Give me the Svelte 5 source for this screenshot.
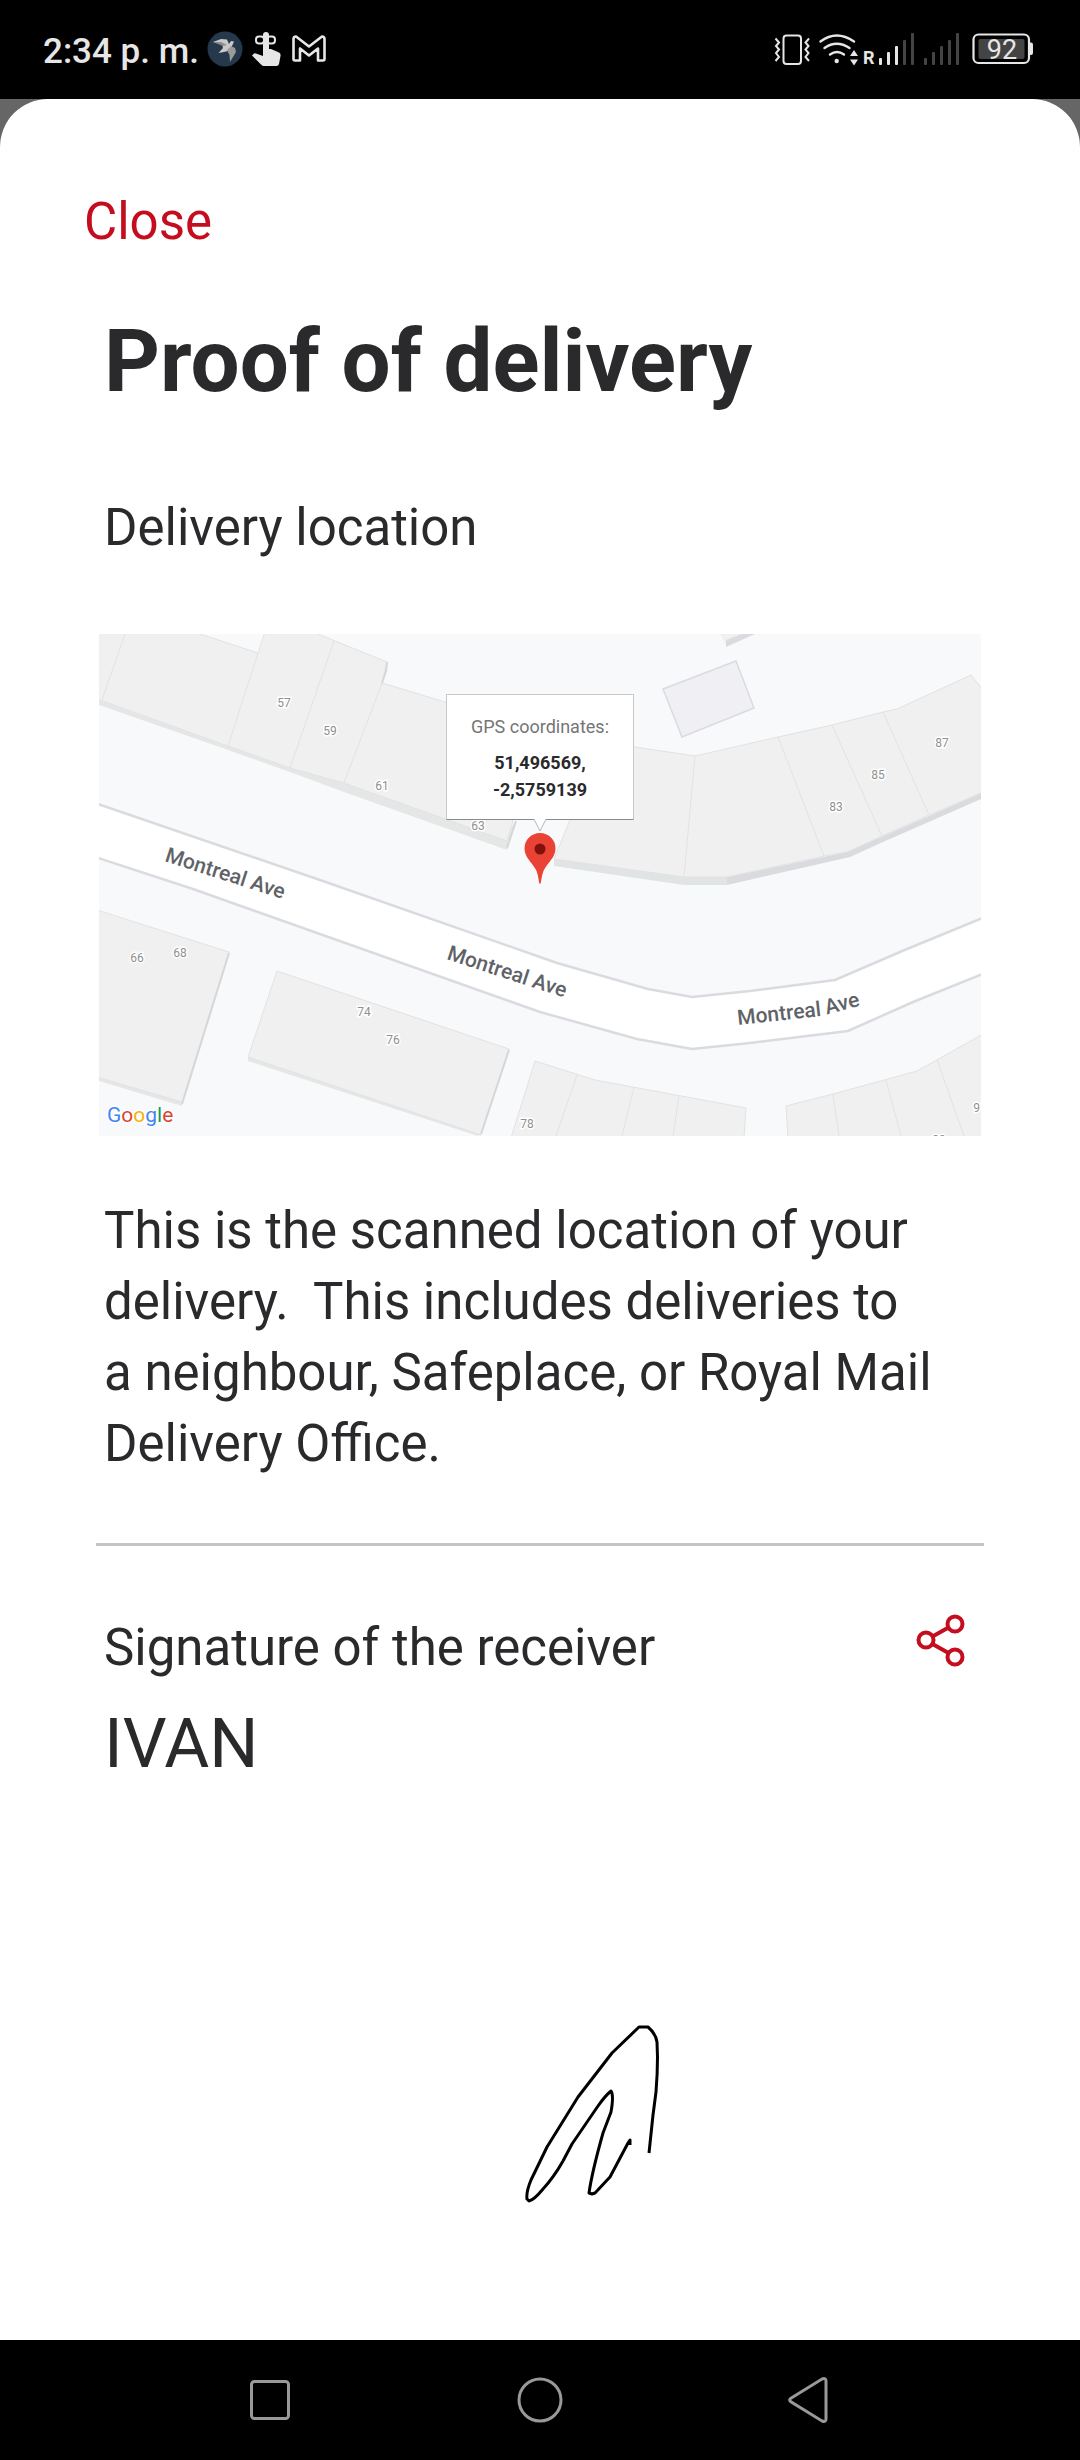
<script>
  let { receiver = 'IVAN', latitude = '51,496569', longitude = '-2,5759139' } = $props();

  let open = $state(true);

  // House numbers on the map
  const houses = [
    { number: '57', x: 185, y: 68 },
    { number: '59', x: 231, y: 96 },
    { number: '61', x: 283, y: 151 },
    { number: '63', x: 379, y: 191 },
    { number: '83', x: 737, y: 172 },
    { number: '85', x: 779, y: 140 },
    { number: '87', x: 843, y: 108 },
    { number: '66', x: 38, y: 323 },
    { number: '68', x: 81, y: 318 },
    { number: '74', x: 265, y: 377 },
    { number: '76', x: 294, y: 405 },
    { number: '78', x: 428, y: 489 },
    { number: '91', x: 881, y: 473 },
    { number: '89', x: 840, y: 505 }
  ];

  // Signal bars, left to right
  const bars = [
    { top: 27, height: 7 },
    { top: 21, height: 13 },
    { top: 15, height: 19 },
    { top: 9, height: 25 },
    { top: 2, height: 32 }
  ];
</script>

<div class="screen">
  <header class="status-bar">
    <div class="status-left">
      <span class="time">2:34 p. m.</span>
      <svg width="36" height="36" viewBox="0 0 36 36" aria-hidden="true">
        <circle cx="18" cy="18" r="17.5" fill="#26384b" />
        <path d="M6 11 L14 8 L20 8.5 L22 13 L24 10 L27 10.5 L25.500 14 L23.500 18 L21 20 L17 21 L11.500 22 L16 17 L15 13 Z" fill="#c9c9c9" />
        <path d="M24 15 L28 17 L29 21 L26 26 L23 31 L22.500 24 L20 19 Z" fill="#9b9b9b" />
        <path d="M6 11 L14 11 L20 14 L16 15 Z" fill="#8d8d8d" />
      </svg>
      <svg width="32" height="36" viewBox="0 0 32 36" aria-hidden="true">
        <g fill="none" stroke="#e6e6e6" stroke-width="2">
          <rect x="5" y="5.500" width="8" height="7" rx="3" />
          <rect x="16" y="5.500" width="8" height="7" rx="3" />
        </g>
        <path d="M12 4 Q12 1 15 1 Q18 1 18 4 L18 18 L20 18 L28 21.500 Q30 22.500 29.500 25 L28 33 Q27.500 35 25.500 35 L13 35 Q11.500 35 10 33.500 L1 24.500 L3 22.500 Q4 22 5 22.500 L12 25 Z" fill="#e6e6e6" />
      </svg>
      <svg width="36" height="36" viewBox="0 0 36 36" aria-hidden="true">
        <path d="M2.500 28 V8 Q2.500 5.500 5 5.500 L18 15.500 L31 5.500 Q33.500 5.500 33.500 8 V28 Q33.500 29.500 32 29.500 H27 V17.500 L18 24.500 L9 17.500 V29.500 H4 Q2.500 29.500 2.500 28 Z" fill="none" stroke="#e6e6e6" stroke-width="2.600" stroke-linejoin="round" />
      </svg>
    </div>

    <div class="status-right">
      <svg width="38" height="36" viewBox="0 0 38 36" aria-hidden="true">
        <g fill="none" stroke="#e6e6e6" stroke-width="2">
          <rect x="9.500" y="4.500" width="17.500" height="28.500" rx="3" />
          <path d="M1.500 7.500 L5 11.500 L2 15 L5 18.500 L2 22 L5 26 L1.500 30" />
          <path d="M35 7.500 L31.500 11.500 L34.500 15 L31.500 18.500 L34.500 22 L31.500 26 L35 30" />
        </g>
      </svg>
      <svg width="98" height="36" viewBox="0 0 98 36" aria-hidden="true">
        <g fill="none" stroke="#e6e6e6" stroke-width="2.400" stroke-linecap="round">
          <path d="M2.500 10.500 Q18.500 -1.500 36 10.500" />
          <path d="M6.500 17 Q18.500 8.500 31.500 17" />
          <path d="M12 23.500 Q19 18.500 26 23.500" />
        </g>
        <circle cx="18.700" cy="30" r="2.200" fill="#e6e6e6" />
        <path d="M36 19 L40 25 H32 Z M32 28.500 H40 L36 34.500 Z" fill="#e6e6e6" />
        <text x="45" y="33" class="roaming">R</text>
        {#each bars as bar, i}
          <rect x={61 + i * 8} y={bar.top} width="3" height={bar.height} rx="1" fill={i < 3 ? '#e6e6e6' : '#444'} />
        {/each}
      </svg>
      <svg width="43" height="36" viewBox="0 0 43 36" aria-hidden="true">
        {#each bars as bar, i}
          <rect x={2 + i * 8} y={bar.top} width="3" height={bar.height} rx="1" fill="#444" />
        {/each}
      </svg>
      <svg width="63" height="36" viewBox="0 0 63 36" aria-hidden="true">
        <rect x="2.500" y="3.500" width="55.500" height="28.500" rx="5" fill="none" stroke="#e6e6e6" stroke-width="2.200" />
        <rect x="7.500" y="8" width="46" height="20" rx="2" fill="#444" />
        <path d="M58.500 11.500 H60 Q62 11.500 62 13.500 V22 Q62 24 60 24 H58.500 Z" fill="#e6e6e6" />
        <text x="31" y="28" class="battery">92</text>
      </svg>
    </div>
  </header>

  <div class="backdrop">
    {#if open}
      <main class="sheet">
        <button class="close" onclick={() => (open = false)}>Close</button>
        <h1>Proof of delivery</h1>
        <h2 class="location">Delivery location</h2>

        <div class="map">
          <svg viewBox="0 0 882 502" role="img" aria-label="Map of the delivery location">
            <rect width="882" height="502" fill="#f8f9fb" />

            <!-- walls below the roofs -->
            <path d="M0 66 L0 71 L129 116 L191 138 L245 158 L408 216 L417 186 L408 200 Z" fill="#e5e7e7" />
            <path d="M455 225 L455 232 L585 251 L628 251 L628 243 Z" fill="#e1e4e4" />
            <path d="M628 243 L628 251 L751 223 L784 208 L882 165 L882 159 L748 218 Z" fill="#d9dbdf" />
            <path d="M0 443 L0 447 L83 472 L83 466 Z" fill="#e5e7e7" />
            <path d="M149 423 L149 427 L379 502 L382 500 Z" fill="#e5e7e7" />

            <!-- roofs -->
            <g class="roof">
              <path d="M-2 -2 L95 -2 L159 19 L166 -2 L214 -2 L288 28 L283 49 L346 68 L440 98 L408 207 L245 149 L191 134 L129 112 L-2 65 Z" />
              <path d="M490 106 L536 113 L596 122 L679 103 L733 91 L784 78 L798 75 L872 41 L884 56 L884 158 L830 181 L783 202 L748 218 L725 222 L628 243 L585 243 L455 225 L471 186 Z" />
              <path d="M-2 276 L130 318 L83 468 L-2 443 Z" />
              <path d="M178 337 L410 415 L382 501 L149 423 Z" />
              <path d="M436 427 L496 446 L647 474 L645 504 L412 504 Z" />
              <path d="M687 472 L734 460 L818 437 L884 400 L884 504 L689 504 Z" />
              <path d="M26 0 L3 66 M159 19 L129 112 M235 7 L191 134 M283 49 L245 149" />
              <path d="M596 122 L585 243 M679 103 L725 222 M733 91 L783 202 M784 78 L830 181" />
              <path d="M478 441 L457 502 M535 453 L523 502 M580 462 L574 502" />
              <path d="M734 460 L740 502 M787 446 L802 502 M838 426 L865 502" />
            </g>
            <path d="M288 28 L287 37 L283 49 M130 319 L83 470 M410 416 L382 500 M417 187 L408 214" fill="none" stroke="#d5d7d9" stroke-width="2" />

            <!-- outbuildings -->
            <path d="M621 0 L627 11 L627 6 L643 0 Z" fill="#f0f0f0" />
            <path d="M627 6 L643 0 L656 0 L627 13 Z" fill="#d9dbdf" />
            <path d="M564 55 L637 27 L655 74 L583 103 Z" fill="#f0f0f4" stroke="#dadbde" stroke-width="1.500" />

            <!-- road -->
            <path d="M-4 169 L221 246 L441 323 L458 329 L549 355 L593 363 L651 357 L736 346 L808 315 L886 283 L886 339 L814 368 L749 397 L651 409 L593 415 L538 405 L441 378 L94 255 L-4 223 Z" fill="#fff" stroke="#dadbdf" stroke-width="2.500" />
            <path id="road-west" d="M65 227 L199 270" fill="none" />
            <path id="road-mid" d="M347 325 L479 368" fill="none" />
            <path id="road-east" d="M639 391 L722 382 L775 368" fill="none" />
            <text class="street"><textPath href="#road-west">Montreal Ave</textPath></text>
            <text class="street"><textPath href="#road-mid">Montreal Ave</textPath></text>
            <text class="street"><textPath href="#road-east">Montreal Ave</textPath></text>

            {#each houses as house}
              <text class="house" x={house.x} y={house.y + 5}>{house.number}</text>
            {/each}

            <text class="google" x="8" y="488"><tspan fill="#4285f4">G</tspan><tspan fill="#db4437">o</tspan><tspan fill="#f4b400">o</tspan><tspan fill="#4285f4">g</tspan><tspan fill="#0f9d58">l</tspan><tspan fill="#db4437">e</tspan></text>

            <!-- marker -->
            <path d="M441 250 C439.500 250 440 241 436.500 235 C432.500 228 425.500 223 425.500 214.500 A15.500 15.500 0 0 1 456.500 214.500 C456.500 223 449.500 228 445.500 235 C442 241 442.500 250 441 250 Z" fill="#ea4335" />
            <circle cx="441" cy="215" r="5.500" fill="#7f120c" />
          </svg>

          <div class="callout">
            <p class="callout-label">GPS coordinates:</p>
            <p class="callout-value">{latitude},<br />{longitude}</p>
            <svg class="tail" width="14" height="14" viewBox="0 0 14 14" aria-hidden="true">
              <path d="M1 0 L7 12 L13 0" fill="#fff" stroke="#b5b5b5" />
              <path d="M2 0 H12" stroke="#fff" stroke-width="3" />
            </svg>
          </div>
        </div>

        <p class="description">This is the scanned location of your<br />delivery.&nbsp; This includes deliveries to a&nbsp;neighbour, Safeplace, or Royal Mail Delivery Office.</p>

        <hr />

        <div class="signature-head">
          <h2>Signature of the receiver</h2>
          <button class="share" aria-label="Share">
            <svg width="62" height="54" viewBox="0 0 62 54" fill="none" stroke="#c40d1e" stroke-width="4">
              <circle cx="12" cy="26" r="7.500" />
              <circle cx="41" cy="10" r="7.500" />
              <circle cx="41" cy="43" r="7.500" />
              <path d="M18.500 22.500 L34.500 13.500 M18.500 30 L34.500 39" />
            </svg>
          </button>
        </div>
        <p class="receiver">{receiver}</p>

        <svg class="signature" viewBox="0 0 882 554" role="img" aria-label="Signature">
          <path d="M550 367 L554 329 L557 306 Q558.500 288 558.500 271 L558 256 Q557 248 549 241 L540 241 L513 267 L479 311 L448 361 L432 394 Q427 406 428 413 L430 415 Q435 414 444 403 Q455 391 464 375 L473 358 L499 320 Q506 310 512 305 Q515 309 512 326 L504 347 Q493 386 490 407 L493 408 L496 407 L511 391 L529 357 L531 354 L531 359" />
        </svg>
      </main>
    {/if}
  </div>

  <nav class="nav-bar">
    <button aria-label="Recent apps">
      <svg width="48" height="48" viewBox="0 0 48 48"><rect x="5.500" y="5.500" width="37" height="37" rx="3" /></svg>
    </button>
    <button aria-label="Home">
      <svg width="48" height="48" viewBox="0 0 48 48"><circle cx="24" cy="24" r="21" /></svg>
    </button>
    <button aria-label="Back">
      <svg width="48" height="48" viewBox="0 0 48 48"><path d="M4.500 22.500 L36 3 Q40 1.500 40 5 V43 Q40 46.500 36 45 L4.500 25.500 Q3 24 4.500 22.500 Z" /></svg>
    </button>
  </nav>
</div>

<style>
  :global(body) {
    margin: 0;
    background: #000;
  }

  .screen {
    min-height: 100vh;
    display: flex;
    flex-direction: column;
    font-family: Roboto, "Liberation Sans", sans-serif;
    color: #2a2a2c;
  }

  h1,
  h2,
  p {
    margin: 0;
    font-weight: 400;
  }

  button {
    padding: 0;
    border: 0;
    background: none;
    font: inherit;
    cursor: pointer;
  }

  svg {
    display: block;
  }

  /* Status bar */
  .status-bar {
    display: flex;
    justify-content: space-between;
    padding: 31px 46px 32px 43px;
    background: #000;
  }

  .status-left,
  .status-right {
    display: flex;
  }

  .status-left {
    gap: 8px;
  }

  .status-right {
    gap: 6px;
  }

  .time {
    font-size: 35px;
    line-height: 42px;
    height: 36px;
    font-weight: 500;
    color: #e6e6e6;
  }

  .roaming {
    font-size: 18px;
    font-weight: 700;
    fill: #e6e6e6;
  }

  .battery {
    font-size: 27px;
    text-anchor: middle;
    fill: #e6e6e6;
  }

  /* Sheet */
  .backdrop {
    flex: 1;
    display: flex;
    flex-direction: column;
    background: #666;
  }

  .sheet {
    flex: 1;
    padding-top: 93px;
    background: #fff;
    border-radius: 48px 48px 0 0;
  }

  .close {
    display: block;
    margin-left: 84px;
    font-size: 51px;
    line-height: 60px;
    color: #c40d1e;
  }

  h1 {
    margin: 57px 104px 0;
    font-size: 87px;
    line-height: 104px;
    font-weight: 700;
  }

  h2 {
    font-size: 51px;
    line-height: 60px;
  }

  .location {
    margin: 85px 104px 76px;
  }

  /* Map */
  .map {
    position: relative;
    margin: 0 99px;
  }

  .roof {
    fill: #f0f0f0;
    stroke: #e2e2e2;
  }

  .street {
    font-size: 21px;
    font-weight: 500;
    fill: #5f6368;
  }

  .house {
    font-size: 12px;
    text-anchor: middle;
    fill: #8f8f8f;
    stroke: #fff;
    stroke-width: 3px;
    paint-order: stroke;
  }

  .google {
    font-size: 21px;
    stroke: #fff;
    stroke-width: 3px;
    paint-order: stroke;
  }

  .callout {
    position: absolute;
    top: 60px;
    left: 50%;
    width: 186px;
    margin-left: -94px;
    padding: 18px 0 16px;
    border: 1px solid #c8c8c8;
    border-bottom-color: #8a8a8a;
    background: #fff;
    text-align: center;
    font-size: 18px;
    line-height: 27px;
  }

  .callout-label {
    margin-bottom: 9px;
    color: #757575;
  }

  .callout-value {
    font-weight: 700;
  }

  .tail {
    position: absolute;
    top: 100%;
    left: 50%;
    margin-left: -7px;
  }

  .description {
    margin: 59px 104px 64px;
    font-size: 51px;
    line-height: 71px;
  }

  hr {
    height: 3px;
    margin: 0 96px;
    border: 0;
    background: #c4c4c4;
  }

  .signature-head {
    display: flex;
    justify-content: space-between;
    align-items: flex-end;
    height: 64px;
    margin: 68px 104px 24px;
  }

  .share {
    align-self: flex-start;
  }

  .receiver {
    margin: 0 104px;
    font-size: 69px;
    line-height: 84px;
  }

  .signature {
    margin: 0 99px;
  }

  .signature path {
    fill: none;
    stroke: #000;
    stroke-width: 3px;
    stroke-linejoin: round;
  }

  /* Navigation bar */
  .nav-bar {
    display: grid;
    grid-template-columns: repeat(3, 1fr);
    padding: 36px 12.5%;
    background: #000;
  }

  .nav-bar button {
    display: flex;
    justify-content: center;
  }

  .nav-bar svg {
    fill: none;
    stroke: #999;
    stroke-width: 3px;
  }
</style>
